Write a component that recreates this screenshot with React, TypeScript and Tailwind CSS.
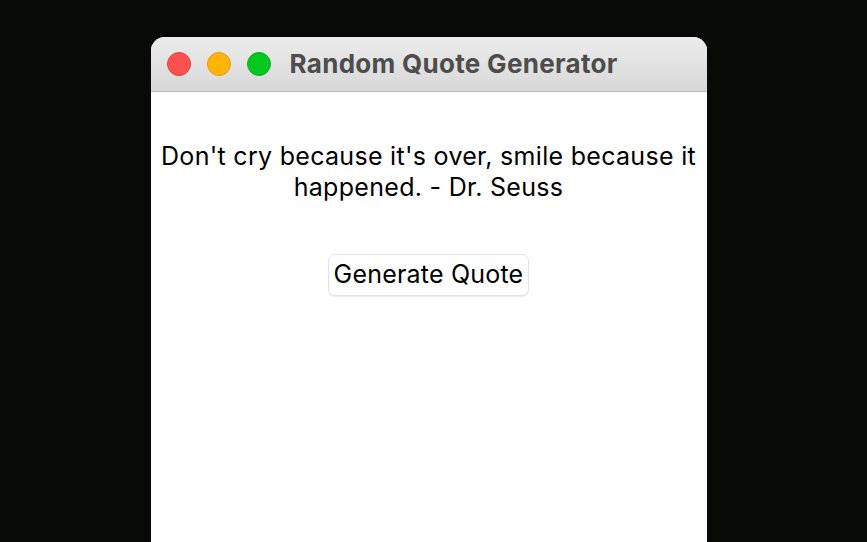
export default function App() {
  return (
    <div className="min-h-screen h-[542px] overflow-hidden bg-[#080a05] flex justify-center" style={{ fontFamily: "Inter, 'Noto Sans', sans-serif" }}>
      <div className="mt-[37px] ml-[-10px] w-[556px] flex flex-col bg-white rounded-t-[14px] overflow-hidden">
        {/* Title bar */}
        <div className="h-[55px] flex items-center px-[16px] gap-[16px] bg-gradient-to-b from-[#ececec] to-[#d8d8d8] border-b border-[#b9b9b9]">
          <div className="flex gap-[16px]">
            <span className="w-[24px] h-[24px] rounded-full bg-[#ff5050] border border-[#e0443e]" />
            <span className="w-[24px] h-[24px] rounded-full bg-[#ffb40a] border border-[#e09e15]" />
            <span className="w-[24px] h-[24px] rounded-full bg-[#00c81e] border border-[#12ac28]" />
          </div>
          <span className="ml-[3px] text-[26px] font-bold text-[#4d4d4d] leading-none tracking-[0.3px]">Random Quote Generator</span>
        </div>

        {/* Content */}
        <div className="flex flex-col items-center pt-[49px]">
          <p className="text-[25px] leading-[31px] tracking-[0.3px] text-black text-center px-[6px]">
            Don't cry because it's over, smile because it happened. - Dr. Seuss
          </p>
          <button className="mt-[51px] px-[5px] h-[42px] text-[25px] tracking-[0.2px] text-black bg-white border border-[#e3e3e3] rounded-[7px] shadow-[0_1px_1px_rgba(0,0,0,0.08)]">
            Generate Quote
          </button>
        </div>
      </div>
    </div>
  );
}
